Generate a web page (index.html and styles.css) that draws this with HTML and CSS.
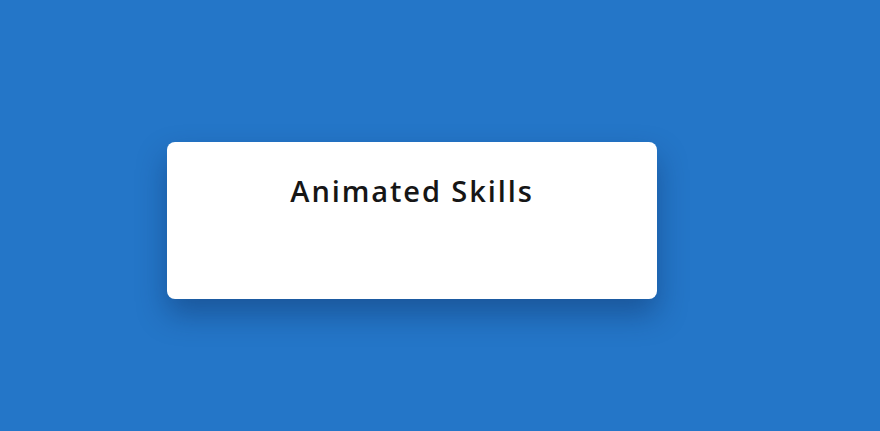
FILE: index.html
```html
<!DOCTYPE html>
<html>
<head>
<meta charset="utf-8">
<link rel="stylesheet" href="styles.css">
</head>
<body>
<div class="page">
  <div class="card">
    <h1 class="title">Animated Skills</h1>
  </div>
</div>
</body>
</html>
```
FILE: styles.css
```css
html, body {
  margin: 0;
  padding: 0;
  width: 880px;
  height: 431px;
  overflow: hidden;
  background: #2476c8;
}
.page {
  width: 880px;
  height: 431px;
  padding-top: 142px;
  padding-left: 167px;
  box-sizing: border-box;
}
.card {
  width: 490px;
  height: 157px;
  background: #ffffff;
  border-radius: 8px;
  box-shadow: 0 15px 30px rgba(10, 35, 80, 0.38);
  display: flex;
  justify-content: center;
}
.title {
  margin: 29px 0 0 0;
  font-family: "Open Sans", "Liberation Sans", sans-serif;
  font-weight: 600;
  font-size: 29px;
  line-height: 40px;
  letter-spacing: 1.9px;
  color: #161616;
}
```
